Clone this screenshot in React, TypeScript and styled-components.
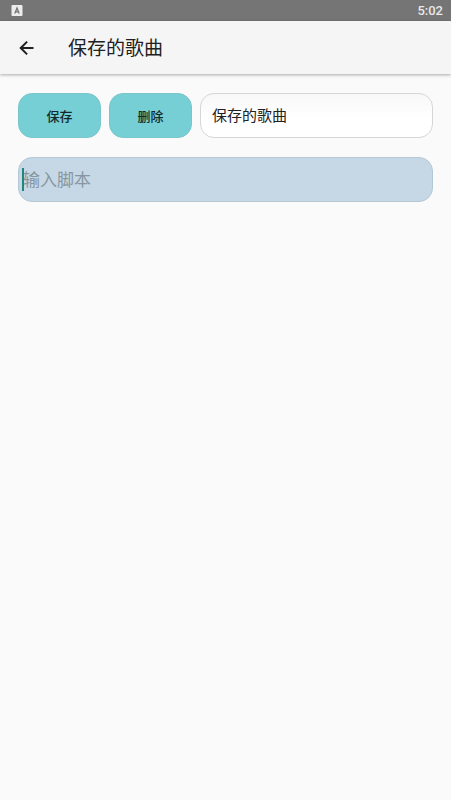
import React, { useState } from "react";
import styled, { createGlobalStyle } from "styled-components";

const GlobalStyle = createGlobalStyle`
  *, *::before, *::after { box-sizing: border-box; }
  body {
    margin: 0;
    background: #fafafa;
    color: #212121;
    font-family: Roboto, "Noto Sans CJK SC", sans-serif;
  }
  button, select, input { font-family: inherit; }
`;

const StatusBar = styled.div`
  display: flex;
  align-items: center;
  justify-content: space-between;
  height: 21px;
  padding: 0 8px 0 11px;
  background: #757575;
`;

const Clock = styled.time`
  color: #e8e8e8;
  font-size: 13px;
  font-weight: 500;
  line-height: 20px;
`;

const AppBar = styled.header`
  display: flex;
  align-items: center;
  gap: 24px;
  height: 53px;
  padding: 0 16px;
  background: #f5f5f5;
  box-shadow: 0 1px 3px rgba(0, 0, 0, 0.32);
`;

const BackButton = styled.button`
  display: flex;
  align-items: center;
  justify-content: center;
  width: 28px;
  height: 40px;
  margin: 0;
  padding: 0 7px 0 0;
  border: 0;
  background: none;
  color: #212121;
  cursor: pointer;
`;

const Title = styled.h1`
  margin: 0;
  padding-top: 3px;
  font-size: 19px;
  font-weight: 400;
  line-height: 28px;
`;

const Content = styled.main`
  display: flex;
  flex-direction: column;
  gap: 19px;
  padding: 19px 18px;
`;

const Toolbar = styled.div`
  display: flex;
  gap: 8px;
`;

const ActionButton = styled.button`
  width: 83px;
  height: 45px;
  padding: 0;
  border: 1px solid #7ac6ca;
  border-radius: 14px;
  background: #76cfd5;
  color: #12292b;
  font-size: 13px;
  font-weight: 500;
  cursor: pointer;
`;

const SongSelect = styled.select`
  flex: 1;
  min-width: 0;
  height: 45px;
  padding: 0 11px;
  border: 1px solid #d6d6d6;
  border-radius: 14px;
  appearance: none;
  background: linear-gradient(#f8f8f8, #ffffff 60%);
  color: #212121;
  font-size: 15px;
`;

const ScriptField = styled.div`
  position: relative;
  display: flex;
`;

const ScriptInput = styled.input`
  flex: 1;
  min-width: 0;
  height: 45px;
  padding: 0 4px;
  border: 1px solid #b4c8d6;
  border-radius: 14px;
  outline: none;
  background: #c6d8e5;
  color: #212121;
  font-size: 17px;
  caret-color: #1f877c;

  &::placeholder {
    color: #8796a0;
    opacity: 1;
  }
`;

const Caret = styled.span`
  position: absolute;
  top: 11px;
  left: 4px;
  width: 2px;
  height: 23px;
  background: #1f877c;
  pointer-events: none;
`;

const KeyboardIcon = () => (
  <svg width="12" height="12" viewBox="0 0 12 12" aria-hidden="true">
    <rect x="0.5" y="0" width="11" height="11" rx="1" fill="#ededed" />
    <path d="M3.8 8.5 6 3l2.2 5.5M4.6 6.8h2.8" fill="none" stroke="#757575" strokeWidth="1.3" />
  </svg>
);

const BackArrow = () => (
  <svg width="22" height="22" viewBox="0 0 24 24" aria-hidden="true">
    <path
      fill="none"
      stroke="currentColor"
      strokeWidth="2.3"
      d="M20 12H5.6M12.7 4.7 5.4 12l7.3 7.3"
    />
  </svg>
);

export default function App() {
  const [script, setScript] = useState("");

  return (
    <>
      <GlobalStyle />
      <StatusBar>
        <KeyboardIcon />
        <Clock>5:02</Clock>
      </StatusBar>
      <AppBar>
        <BackButton type="button" aria-label="返回">
          <BackArrow />
        </BackButton>
        <Title>保存的歌曲</Title>
      </AppBar>
      <Content>
        <Toolbar>
          <ActionButton type="button">保存</ActionButton>
          <ActionButton type="button">删除</ActionButton>
          <SongSelect aria-label="保存的歌曲">
            <option>保存的歌曲</option>
          </SongSelect>
        </Toolbar>
        <ScriptField>
          <ScriptInput
            aria-label="输入脚本"
            placeholder="输入脚本"
            value={script}
            onChange={(event) => setScript(event.target.value)}
          />
          {script === "" && <Caret />}
        </ScriptField>
      </Content>
    </>
  );
}
